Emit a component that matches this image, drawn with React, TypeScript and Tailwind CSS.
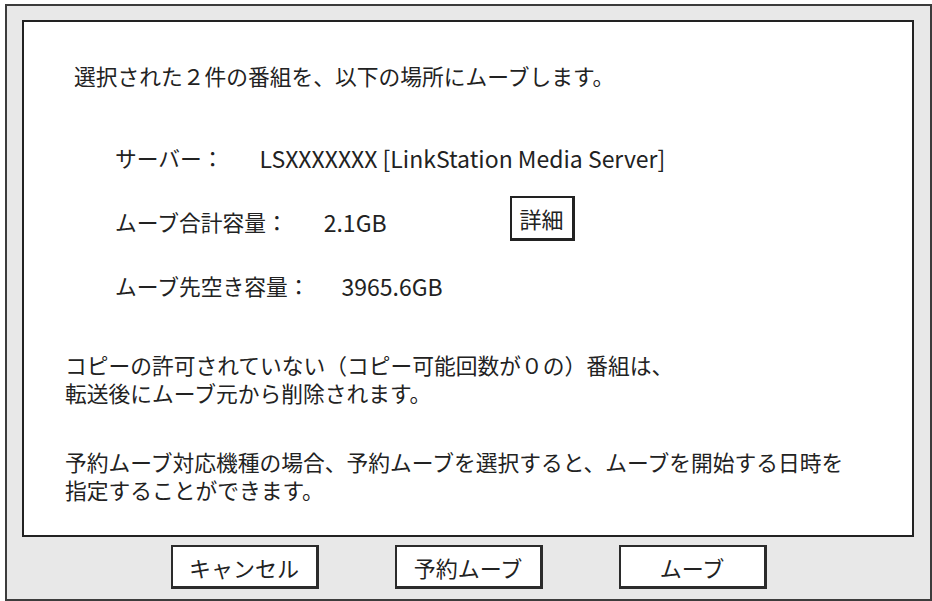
import React from "react";

const font = "font-['Noto_Sans_CJK_JP','Noto_Sans',sans-serif]";

const InfoRow = ({ label, value, gap, children }: any) => (
  <div className="flex items-center h-[28px]">
    <span>{label}</span>
    <span className={`${gap} text-[23px]`}>{value}</span>
    {children}
  </div>
);

const DialogButton = ({ label }: { label: string }) => (
  <button
    type="button"
    className="w-[148px] h-[44px] bg-white border-2 border-[#2b2b2b] border-b-[3px] border-r-[3px] text-[22px] leading-none text-[#222]"
  >
    {label}
  </button>
);

export default function App() {
  return (
    <div className={`w-[932px] h-[601px] bg-white pt-[4px] pl-[5px] ${font}`}>
      <div className="w-[927px] h-[597px] bg-[#e8e8e8] border-2 border-[#3c3c3c] flex flex-col">
        <div className="ml-[15px] mt-[14px] w-[892px] h-[517px] bg-white border-2 border-[#222] text-[21.75px] leading-[28px] text-[#222]">
          <p className="mt-[40px] pl-[50px]">
            選択された２件の番組を、以下の場所にムーブします。
          </p>

          <div className="pl-[91px] mt-[54px] flex flex-col gap-[36px]">
            <InfoRow
              label="サーバー："
              value="LSXXXXXXX [LinkStation Media Server]"
              gap="ml-[36px]"
            />
            <InfoRow label="ムーブ合計容量：" value="2.1GB" gap="ml-[36px]">
              <span className="ml-[123px] mb-[8px] w-[65px] h-[45px] border-2 border-[#222] border-b-[3px] border-r-[3px] flex items-center justify-center text-[22px]">
                詳細
              </span>
            </InfoRow>
            <InfoRow
              label="ムーブ先空き容量："
              value="3965.6GB"
              gap="ml-[32px]"
            />
          </div>

          <p className="pl-[41px] mt-[51px]">
            コピーの許可されていない（コピー可能回数が０の）番組は、
            <br />
            転送後にムーブ元から削除されます。
          </p>

          <p className="pl-[41px] mt-[41px]">
            予約ムーブ対応機種の場合、予約ムーブを選択すると、ムーブを開始する日時を
            <br />
            指定することができます。
          </p>
        </div>

        <div className="flex justify-center gap-[76px] mt-[8px]">
          <DialogButton label="キャンセル" />
          <DialogButton label="予約ムーブ" />
          <DialogButton label="ムーブ" />
        </div>
      </div>
    </div>
  );
}
